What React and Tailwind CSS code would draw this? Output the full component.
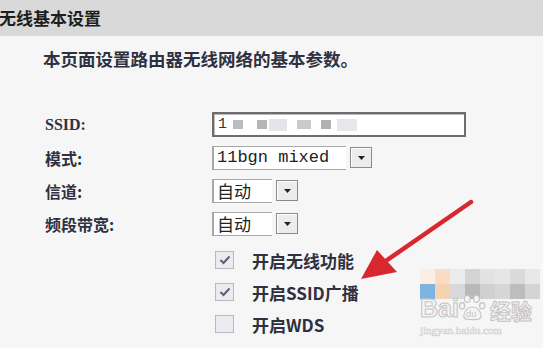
import React from 'react';

const cjk = { fontFamily: '"Noto Sans CJK SC", "Noto Sans", sans-serif' };
const mono = { fontFamily: '"Liberation Mono", "Noto Sans CJK SC", monospace' };

const DropButton = () => (
  <div className="flex h-[21px] w-[22px] items-center justify-center border border-[#8a8a8a] bg-[#ececec] shadow-[inset_1px_1px_0_#fff]">
    <svg width="9" height="6" viewBox="0 0 9 6">
      <path d="M1 1h7L4.5 5z" fill="#222" />
    </svg>
  </div>
);

const Select = ({ text, width, mono: isMono }) => (
  <div className="flex items-center gap-[4px]">
    <div
      className="flex h-[24px] items-center border-l-2 border-t border-b border-[#a8a8a8] bg-white pl-[3px] text-[17px] leading-none text-[#222]"
      style={{ width, ...(isMono ? mono : cjk) }}
    >
      {text}
    </div>
    <DropButton />
  </div>
);

const Row = ({ label, children, labelStyle = cjk }) => (
  <div className="flex h-[33px] items-center">
    <div className="w-[167px] text-[16px] font-bold text-[#2f3040]" style={labelStyle}>
      {label}
    </div>
    {children}
  </div>
);

const Check = ({ checked, label }) => (
  <div className="flex h-[32px] items-center">
    <div className="flex h-[18px] w-[19px] items-center justify-center border border-[#b9b9c2] bg-[#ececf0]">
      {checked && (
        <svg width="12" height="10" viewBox="0 0 12 10">
          <path d="M1.5 5l3 3 6-6.5" fill="none" stroke="#55607a" strokeWidth="2" />
        </svg>
      )}
    </div>
    <span className="ml-[18px] text-[17px] font-bold text-[#2f3040]" style={cjk}>
      {label}
    </span>
  </div>
);

const Watermark = () => {
  const top = ['#fbeee3', '#f8dcc4', '#ececec', '#d4d4d4', '#e2e2e2', '#e6e6e6', '#dadada', '#e8e8e8'];
  const bottom = ['#7fb4e2', '#f5d2b0', '#d8d8d8', '#b9b9b9', '#d0d0d0', '#d6d6d6', '#bdbdbd', '#d4d4d4'];
  return (
    <div className="absolute left-[420px] top-[269px] w-[123px]">
      <div className="flex">
        {top.map((c, i) => (
          <div key={i} className="h-[15px] w-[15px]" style={{ background: c }} />
        ))}
      </div>
      <div className="flex">
        {bottom.map((c, i) => (
          <div key={i} className="h-[15px] w-[15px]" style={{ background: c }} />
        ))}
      </div>
      <div className="-mt-[6px] flex items-end">
        <span
          className="text-[25px] font-bold leading-none text-[#f4f4f4] [-webkit-text-stroke:1px_#c4c4c4]"
          style={{ fontFamily: '"Liberation Sans", sans-serif' }}
        >
          Bai
        </span>
        <svg width="30" height="28" viewBox="0 0 26 24" className="-ml-[1px]">
          <ellipse cx="8" cy="5" rx="2.5" ry="3" fill="#f4f4f4" stroke="#c4c4c4" />
          <ellipse cx="16" cy="5" rx="2.5" ry="3" fill="#f4f4f4" stroke="#c4c4c4" />
          <ellipse cx="3.5" cy="11" rx="2.3" ry="2.8" fill="#f4f4f4" stroke="#c4c4c4" />
          <ellipse cx="21" cy="11" rx="2.3" ry="2.8" fill="#f4f4f4" stroke="#c4c4c4" />
          <path d="M5 20c0-5 4-8 7.5-8S20 15 20 20c0 3-4 3-7.5 3S5 23 5 20z" fill="#f4f4f4" stroke="#c4c4c4" />
          <text x="7" y="21" fontSize="8" fill="#c4c4c4" fontFamily="Liberation Sans">du</text>
        </svg>
        <span className="ml-[2px] text-[21px] font-bold leading-none text-[#f4f4f4] [-webkit-text-stroke:1px_#c4c4c4]" style={cjk}>
          经验
        </span>
      </div>
      <div
        className="mt-[4px] text-[11px] leading-none text-[#eeeeee] [-webkit-text-stroke:0.5px_#d0d0d0]"
        style={{ fontFamily: '"Liberation Serif", serif' }}
      >
        jingyan.baidu.com
      </div>
    </div>
  );
};

const Arrow = () => (
  <svg className="absolute left-0 top-0" width="543" height="348" viewBox="0 0 543 348">
    <line x1="471" y1="202" x2="380" y2="265" stroke="#d8282f" strokeWidth="4.5" strokeLinecap="round" />
    <path d="M361 279L377 250L397 272Z" fill="#d8282f" />
  </svg>
);

export default function App() {
  return (
    <div className="relative h-[348px] w-[543px] overflow-hidden bg-[#f6f6f6]">
      <div className="flex h-[36px] items-center bg-[#d9d9d9] text-[17px] font-bold text-[#1e1e1e]" style={cjk}>
        <span className="-ml-[1px]">无线基本设置</span>
      </div>

      <div className="pl-[45px] pt-[10px]">
        <div className="-ml-[2px] text-[17.5px] font-bold text-[#2f3040]" style={cjk}>
          本页面设置路由器无线网络的基本参数。
        </div>

        <div className="mt-[36px]">
          <Row label="SSID:" labelStyle={{ fontFamily: '"Liberation Serif", serif' }}>
            <div className="flex h-[25px] w-[254px] items-center border-2 border-[#6d6d6d] bg-white pl-[4px] shadow-[inset_1px_1px_0_#bbb]">
              <span className="text-[15px] leading-none text-[#333]" style={mono}>1</span>
              <span className="ml-[6px] h-[9px] w-[10px] bg-[#b9bcc0]" />
              <span className="ml-[14px] h-[9px] w-[10px] bg-[#b4b6ba]" />
              <span className="ml-[2px] h-[12px] w-[18px] bg-[#e3e5e8]" />
              <span className="ml-[10px] h-[9px] w-[14px] bg-[#c8cacd]" />
              <span className="ml-[10px] h-[9px] w-[10px] bg-[#aeb0b4]" />
              <span className="ml-[6px] h-[12px] w-[20px] bg-[#e6e7ea]" />
            </div>
          </Row>
          <Row label="模式:">
            <Select text="11bgn mixed" width="134px" mono />
          </Row>
          <Row label="信道:">
            <Select text="自动" width="60px" />
          </Row>
          <Row label="频段带宽:">
            <Select text="自动" width="60px" />
          </Row>

          <div className="ml-[170px] mt-[4px]">
            <Check checked label="开启无线功能" />
            <Check checked label="开启SSID广播" />
            <Check label="开启WDS" />
          </div>
        </div>
      </div>

      <Watermark />
      <Arrow />
    </div>
  );
}
